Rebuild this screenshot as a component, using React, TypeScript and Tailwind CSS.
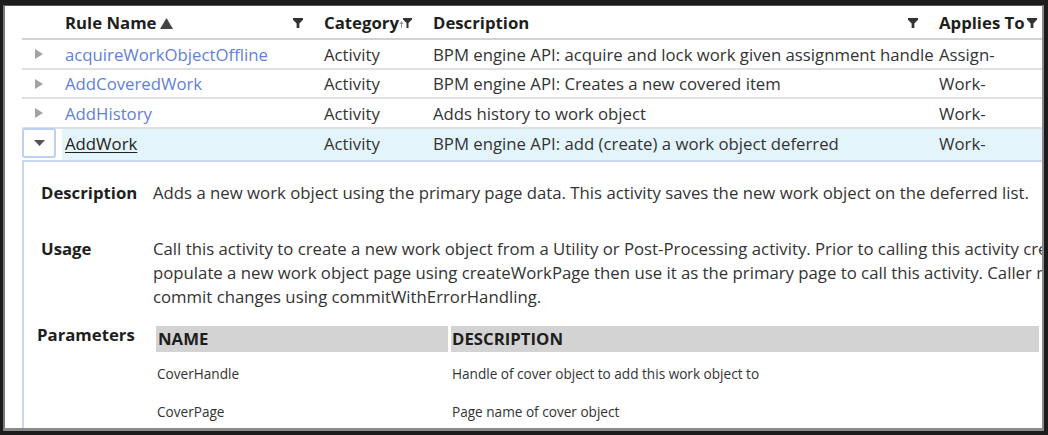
import React from "react";

const rows = [
  { name: "acquireWorkObjectOffline", cat: "Activity", desc: "BPM engine API: acquire and lock work given assignment handle", applies: "Assign-" },
  { name: "AddCoveredWork", cat: "Activity", desc: "BPM engine API: Creates a new covered item", applies: "Work-" },
  { name: "AddHistory", cat: "Activity", desc: "Adds history to work object", applies: "Work-" },
];

function Funnel() {
  return (
    <svg width="10" height="10" viewBox="0 0 11 11" className="shrink-0">
      <polygon points="0,0 11,0 11,2 7,6 7,11 4,11 4,6 0,2" fill="#333" />
    </svg>
  );
}

function SortFilter() {
  return (
    <svg width="13" height="12" viewBox="0 0 13 12" className="shrink-0">
      <polygon points="2.5,4 0.5,7 4.5,7" fill="#999" />
      <rect x="2" y="7" width="1" height="4" fill="#999" />
      <polygon points="4,1 13,1 13,2.5 9.5,6 9.5,11 7.5,11 7.5,6 4,2.5" fill="#333" />
    </svg>
  );
}

function RightArrow() {
  return (
    <svg width="8" height="10" viewBox="0 0 8 10">
      <polygon points="0,0 8,5 0,10" fill="#a3a3a3" />
    </svg>
  );
}

export default function App() {
  return (
    <div
      className="w-[1048px] h-[435px] bg-[#1c1c1c] pt-[5px] pl-[3px] pr-[4px] pb-[4px]"
      style={{ fontFamily: '"Open Sans", "Noto Sans", sans-serif' }}
    >
      <div className="h-full bg-white border-t border-l-2 border-r-2 border-b-[3px] border-t-[#555] border-l-[#7a7a7a] border-r-[#8a8a8a] border-b-[#8a8a8a] overflow-hidden">
        <div className="ml-[17px] flex flex-col">
          {/* Header */}
          <div className="flex h-[34px] pt-[2px] border-b-2 border-[#d2d2d2] text-[16.75px] font-bold text-[#1e1e1e] items-center whitespace-nowrap">
            <div className="w-[40px]" />
            <div className="w-[262px] pl-[3px] flex items-center">
              <span>Rule Name</span>
              <svg width="13" height="11" viewBox="0 0 13 11" className="ml-[3px]">
                <polygon points="6.5,0 13,11 0,11" fill="#444" />
              </svg>
              <div className="flex-1" />
              <div className="mr-[21px]"><Funnel /></div>
            </div>
            <div className="w-[109px] flex items-center">
              <span>Category</span>
              <SortFilter />
            </div>
            <div className="w-[506px] flex items-center">
              <span>Description</span>
              <div className="flex-1" />
              <div className="mr-[21px]"><Funnel /></div>
            </div>
            <div className="flex-1 flex items-center">
              <span>Applies To</span>
              <div className="ml-[2px]"><Funnel /></div>
            </div>
          </div>

          {rows.map((r) => (
            <div key={r.name} className="flex h-[29.5px] pt-[1px] border-b-2 border-[#e0e0e0] text-[16.75px] items-center text-[#333] whitespace-nowrap">
              <div className="w-[40px] pl-[13px] flex items-center">
                <RightArrow />
              </div>
              <div className="w-[262px] pl-[3px] text-[#5f7fdc]">{r.name}</div>
              <div className="w-[109px]">{r.cat}</div>
              <div className="w-[506px]">{r.desc}</div>
              <div className="flex-1">{r.applies}</div>
            </div>
          ))}

          {/* Expanded row */}
          <div className="flex h-[31px] text-[16.75px] text-[#333] whitespace-nowrap">
            <div className="w-[40px] flex">
              <div className="w-[34px] h-[30px] -mt-[1px] bg-white border-2 border-[#bcd0f2] rounded-[3px] flex items-center justify-center">
                <svg width="11" height="6" viewBox="0 0 11 6">
                  <polygon points="0,0 11,0 5.5,6" fill="#555" />
                </svg>
              </div>
            </div>
            <div className="flex-1 flex items-center bg-[#e3f4fb]">
              <div className="w-[262px] pl-[3px]">
                <span className="underline underline-offset-2 text-[#222]">AddWork</span>
              </div>
              <div className="w-[109px]">Activity</div>
              <div className="w-[506px]">BPM engine API: add (create) a work object deferred</div>
              <div className="flex-1">Work-</div>
            </div>
          </div>

          {/* Detail panel */}
          <div className="border-t-2 border-l-2 border-[#c9d8f0] pt-[19px] pl-[17px] h-[300px] text-[16.75px] leading-6 text-[#333]">
            <div className="flex">
              <div className="w-[112px] shrink-0 font-bold text-[#1e1e1e]">Description</div>
              <div className="whitespace-nowrap">
                Adds a new work object using the primary page data. This activity saves the new work object on the deferred list.
              </div>
            </div>
            <div className="flex mt-[32px]">
              <div className="w-[112px] shrink-0 font-bold text-[#1e1e1e]">Usage</div>
              <div className="whitespace-nowrap">
                <div>Call this activity to create a new work object from a Utility or Post-Processing activity. Prior to calling this activity create and</div>
                <div>populate a new work object page using createWorkPage then use it as the primary page to call this activity. Caller must</div>
                <div>commit changes using commitWithErrorHandling.</div>
              </div>
            </div>
            <div className="flex mt-[14px] -ml-[4px] mr-[3px]">
              <div className="w-[119px] shrink-0 font-bold text-[#1e1e1e]">Parameters</div>
              <div className="flex-1 mt-[3px]">
                <div className="flex h-[26px] font-bold text-[#1e1e1e] gap-[3px]">
                  <div className="w-[292px] bg-[#d3d3d3] pl-[2px] flex items-center">NAME</div>
                  <div className="flex-1 bg-[#d3d3d3] pl-[1px] flex items-center">DESCRIPTION</div>
                </div>
                <div className="mt-[3px] text-[13.6px] text-[#333]">
                  <div className="flex h-[38px] items-center">
                    <div className="w-[295px] pl-[1px]">CoverHandle</div>
                    <div className="flex-1 pl-[1px]">Handle of cover object to add this work object to</div>
                  </div>
                  <div className="flex h-[38px] items-center">
                    <div className="w-[295px] pl-[1px]">CoverPage</div>
                    <div className="flex-1 pl-[1px]">Page name of cover object</div>
                  </div>
                </div>
              </div>
            </div>
          </div>
        </div>
      </div>
    </div>
  );
}
